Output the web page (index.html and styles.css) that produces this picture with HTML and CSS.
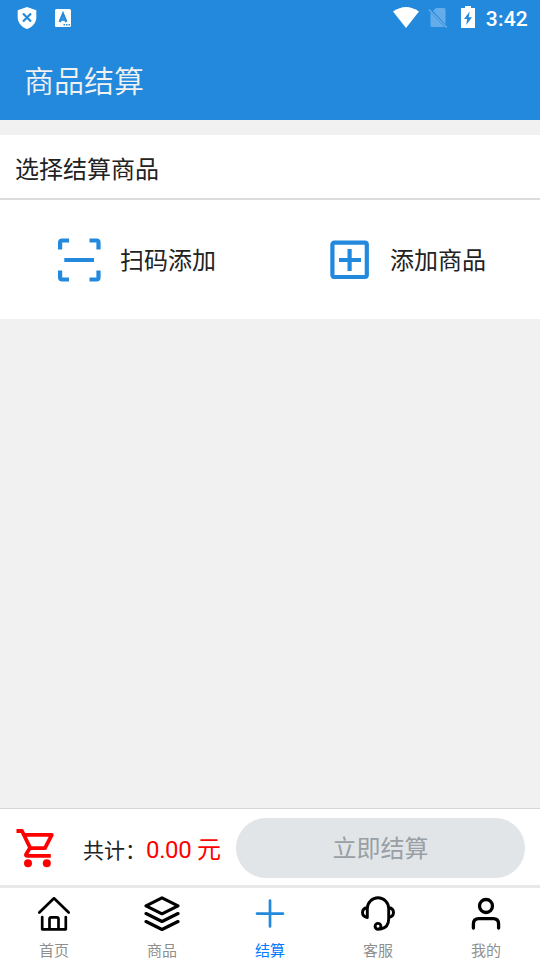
FILE: index.html
```html
<!DOCTYPE html>
<html lang="zh-CN">
<head>
<meta charset="utf-8">
<title>商品结算</title>
<link rel="stylesheet" href="styles.css">
</head>
<body>
<header class="top">
  <div class="status">
    <svg class="status-shield" width="20" height="24" viewBox="0 0 20 24"><path fill="#fff" d="M10 1l9.300 3.300v7.200c0 5.500-4 9.500-9.300 11.500-5.300-2-9.300-6-9.300-11.500V4.300z"/><path d="M6 7.500l8 8m0-8l-8 8" stroke="#2289dc" stroke-width="2.200"/></svg>
    <svg class="status-app" width="16" height="18" viewBox="0 0 16 18"><rect width="16" height="18" rx="1.500" fill="#fff"/><path d="M4.700 13L8 5l3.300 8M5.800 10.500h4.400" fill="none" stroke="#2289dc" stroke-width="2.400"/><path d="M8.500 15.800h1.500m1 0h1.500m1 0H15" stroke="#2289dc" stroke-width="1.500"/></svg>
    <svg class="status-wifi" width="26" height="22" viewBox="0 0 26 22"><path fill="#fff" d="M0 5.500Q13-3.500 26 5.500L13 22z"/></svg>
    <svg class="status-sim" width="20" height="22" viewBox="0 0 20 22"><path fill="#65adea" d="M8 1h8q1.500 0 1.500 1.500v14.700L5 4zM2.500 5.500L16.500 20H4q-1.500 0-1.500-1.500z"/><path d="M.8 2.500l18 18" stroke="#65adea" stroke-width="1.700"/></svg>
    <svg class="status-battery" width="14" height="22" viewBox="0 0 14 22"><path fill="#fff" d="M4 0h6v2h4v20H0V2h4z"/><path fill="#2289dc" d="M8.700 5.500L3 13h3.200l-1 6L11 11.200H7.700z"/></svg>
    <span class="clock">3:42</span>
  </div>
  <h1 class="title">商品结算</h1>
</header>

<main class="content">
  <section class="panel">
    <h2 class="panel-title">选择结算商品</h2>
    <div class="actions">
      <div class="action">
        <svg width="43" height="44" viewBox="0 0 43 44" fill="none" stroke="#2289dc" stroke-width="4.200"><path d="M2.100 11.500V4.500q0-2 2-2h7M31.500 2.500h7q2 0 2 2v7M40.500 32.500v7q0 2-2 2h-7M11 41.500H4.100q-2 0-2-2v-7M6.300 22h29.700"/></svg>
        <span class="action-label">扫码添加</span>
      </div>
      <div class="action">
        <svg width="43" height="44" viewBox="0 0 43 44" fill="none" stroke="#2289dc" stroke-width="4.200"><rect x="4.400" y="4.600" width="34.400" height="34.400" rx="2"/><path d="M11 22h22M21.600 11v22"/></svg>
        <span class="action-label">添加商品</span>
      </div>
    </div>
  </section>
</main>

<div class="checkout">
  <svg class="cart" width="40" height="40" viewBox="0 0 40 40"><path fill="none" stroke="#f00" stroke-width="3.800" stroke-linejoin="round" d="M.5 3h5.500l8.300 17.200M8.300 6.800h27.500L29 20.200H13.800L10 26.500Q9.500 27.800 11.500 27.800h23.300"/><circle cx="12" cy="35.200" r="4" fill="#f00"/><circle cx="30.800" cy="35.200" r="4" fill="#f00"/></svg>
  <span class="total-label">共计：</span>
  <span class="total">0.00 元</span>
  <button class="pay" disabled>立即结算</button>
</div>

<nav class="tabs">
  <div class="tab">
    <svg width="36" height="36" viewBox="0 0 36 36" fill="none" stroke="#000" stroke-width="2.700" stroke-linecap="round" stroke-linejoin="round"><path d="M3.300 16.500L18 2.300l14.700 14.200M6.200 21v12.300h23.600V21M13.500 33V23q0-1.600 1.600-1.600h5.800q1.600 0 1.600 1.600v10"/></svg>
    <span>首页</span>
  </div>
  <div class="tab">
    <svg width="36" height="36" viewBox="0 0 36 36" fill="none" stroke="#000" stroke-width="3.100" stroke-linecap="round" stroke-linejoin="round"><path d="M18 1.800l16 8-16 8-16-8zM2 17.500l16 8 16-8M2 25.500l16 8 16-8"/></svg>
    <span>商品</span>
  </div>
  <div class="tab active">
    <svg width="36" height="36" viewBox="0 0 36 36" stroke="#2289dc" stroke-width="2.700" stroke-linecap="round"><path d="M5 17.600h26M18 4.500v26"/></svg>
    <span>结算</span>
  </div>
  <div class="tab">
    <svg width="36" height="36" viewBox="0 0 36 36" fill="none" stroke="#000" stroke-width="2.900" stroke-linecap="round" stroke-linejoin="round"><path d="M7.300 21.500v-9a10.700 10.700 0 0 1 21.400 0V23q0 8.500-8 10M7.300 11.500q-4.800 1-4.800 5t4.800 5M28.700 11.500q4.800 1 4.800 5t-4.800 5"/><circle cx="18" cy="30.300" r="2.900"/></svg>
    <span>客服</span>
  </div>
  <div class="tab">
    <svg width="36" height="36" viewBox="0 0 36 36" fill="none" stroke="#000" stroke-width="3.300" stroke-linecap="round"><circle cx="18" cy="10" r="6.500"/><path d="M5.400 32V28q0-5.400 5.400-5.400h14.400q5.400 0 5.400 5.400v4"/></svg>
    <span>我的</span>
  </div>
</nav>
</body>
</html>
```
FILE: styles.css
```css
* {
  box-sizing: border-box;
}

body {
  margin: 0;
  width: 540px;
  height: 960px;
  display: flex;
  flex-direction: column;
  overflow: hidden;
  background: #f1f1f1;
  color: #222;
  font-family: Roboto, "Noto Sans CJK SC", sans-serif;
}

svg {
  display: block;
  flex: none;
}

.top {
  height: 120px;
  background: #2289dc;
  color: #fff;
}

.status {
  display: flex;
  height: 36px;
  padding: 6px 12px 0 17px;
}

.status-app {
  margin: 3px auto 0 18px;
}

.status-sim {
  margin: 1px 13px 0 9px;
}

.clock {
  margin-left: 11px;
  font-size: 21px;
  font-weight: 500;
  line-height: 26px;
  letter-spacing: 0.2px;
}

.title {
  margin: 0;
  padding: 2px 0 0 24px;
  font-family: "Noto Sans CJK SC", sans-serif;
  font-size: 30px;
  font-weight: 350;
  line-height: 82px;
  color: #f1f1f1;
}

.content {
  flex: 1;
  padding-top: 15px;
}

.panel {
  background: #fff;
}

.panel-title {
  margin: 0;
  height: 65px;
  padding: 2px 0 0 15px;
  border-bottom: 2px solid #dcdcdc;
  font-family: "Noto Sans CJK SC", sans-serif;
  font-size: 24px;
  font-weight: 400;
  line-height: 61px;
}

.actions {
  display: grid;
  grid-template-columns: 1fr 1fr;
  height: 119px;
}

.action {
  display: flex;
  align-items: center;
  gap: 19px;
  padding-left: 58px;
  font-size: 24px;
}

.action-label {
  margin-top: -2px;
}

.checkout {
  display: flex;
  align-items: center;
  height: 77px;
  padding: 0 15px 0 16px;
  border-top: 1px solid #d6d6d6;
  background: #fff;
  white-space: nowrap;
}

.cart {
  margin-top: 2px;
}

.total-label {
  width: 63px;
  margin: 4px 0 0 27px;
  font-size: 21px;
}

.total {
  width: 90px;
  color: #f00;
  font-size: 24px;
  letter-spacing: -0.35px;
}

.pay {
  width: 289px;
  height: 60px;
  margin-top: 1px;
  padding: 0 0 2px;
  border: 0;
  border-radius: 30px;
  background: #e1e5e8;
  color: #999fa4;
  font: inherit;
  font-size: 24px;
}

.tabs {
  display: grid;
  grid-template-columns: repeat(5, 1fr);
  height: 75px;
  padding-top: 5px;
  border-top: 3px solid #e8e8e8;
  background: #fff;
}

.tab {
  display: flex;
  flex-direction: column;
  align-items: center;
  gap: 8px;
  padding-top: 3px;
  color: #8f8f8f;
  font-size: 15px;
  line-height: 22px;
}

.active {
  color: #007aff;
}
```
